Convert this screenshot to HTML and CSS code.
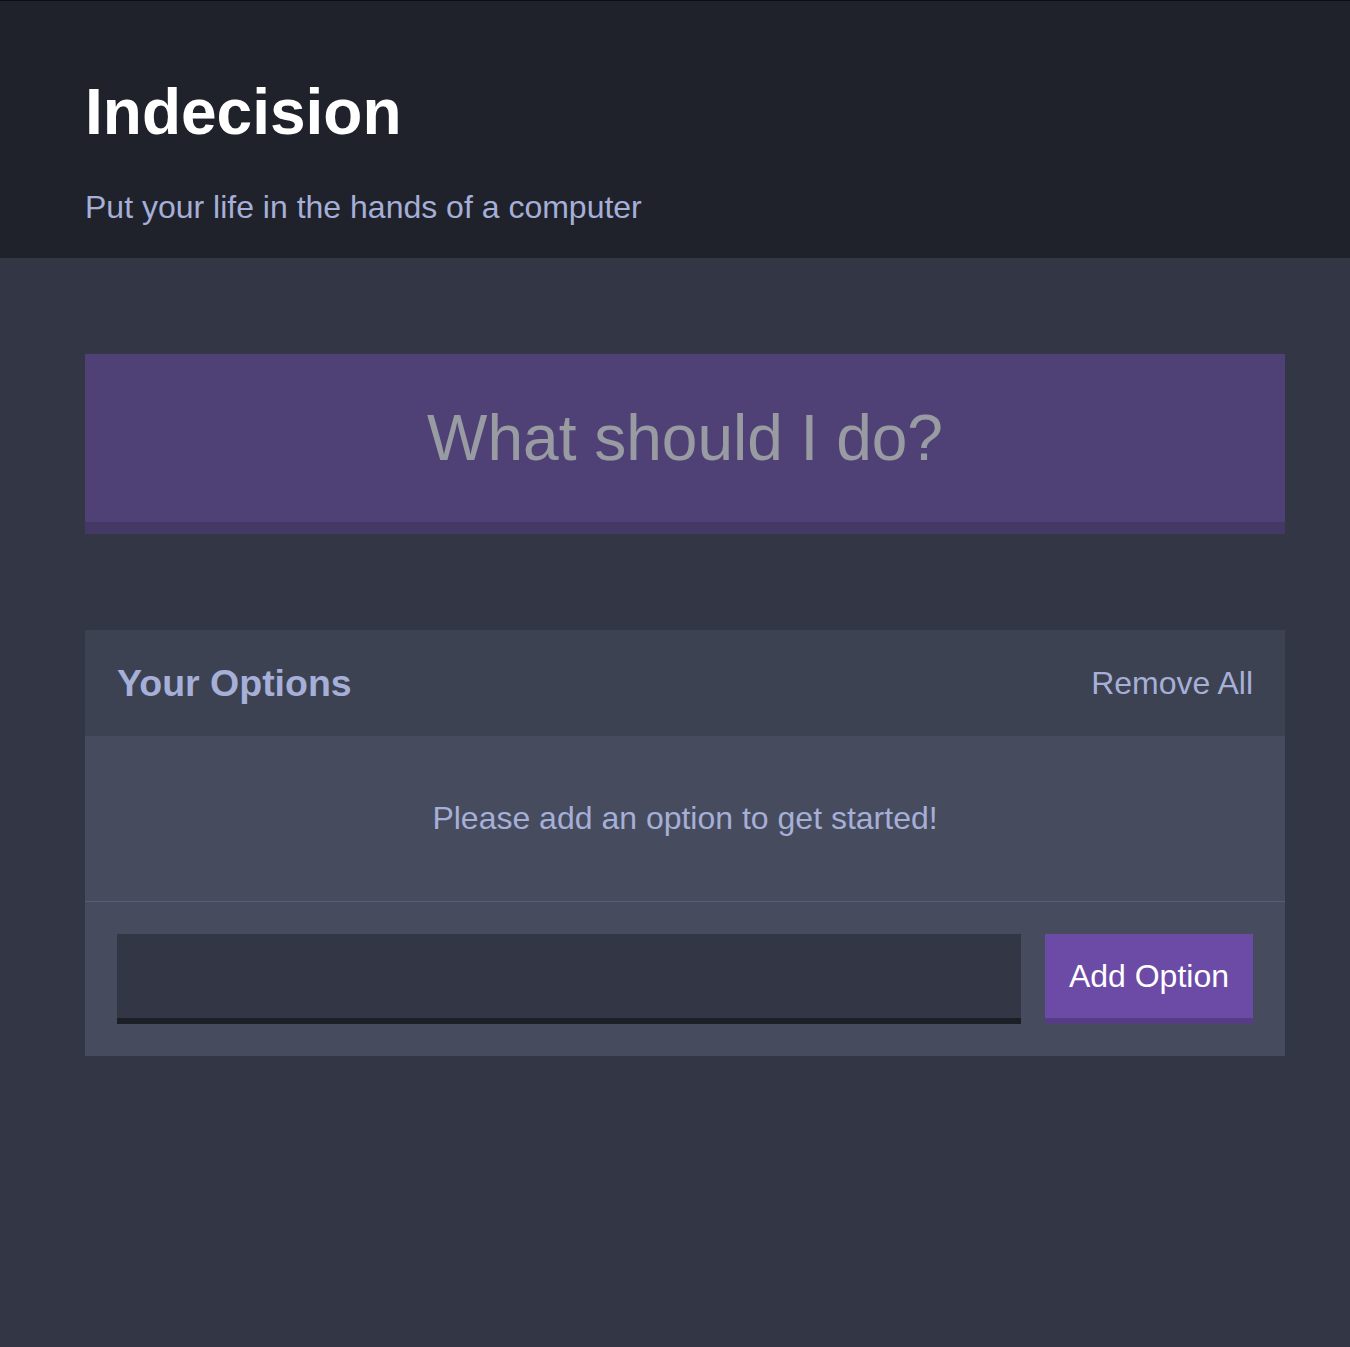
FILE: index.html
```html
<!DOCTYPE html>
<html lang="en">
<head>
<meta charset="utf-8">
<title>Indecision</title>
<link rel="stylesheet" href="styles.css">
</head>
<body>
  <header class="header">
    <div class="container">
      <h1 class="header__title">Indecision</h1>
      <h2 class="header__subtitle">Put your life in the hands of a computer</h2>
    </div>
  </header>
  <main class="container">
    <button class="big-button" disabled>What should I do?</button>
    <section class="widget">
      <div class="widget-header">
        <h3 class="widget-header__title">Your Options</h3>
        <button class="button button--link">Remove All</button>
      </div>
      <p class="widget__message">Please add an option to get started!</p>
      <form class="add-option">
        <input class="add-option__input" type="text" name="option">
        <button class="button" type="button">Add Option</button>
      </form>
    </section>
  </main>
</body>
</html>
```

FILE: styles.css
```css
* {
  box-sizing: border-box;
}

html, body {
  margin: 0;
  padding: 0;
}

body {
  font-family: "Liberation Sans", Arial, Helvetica, sans-serif;
  font-size: 32px;
  background: #333745;
  min-height: 1347px;
}

.container {
  max-width: 1200px;
  margin: 0 65px 0 85px;
}

.header {
  background: #20222b;
  border-top: 1px solid #0c0d10;
  padding: 31px 0 33px;
  margin-bottom: 96px;
}

.header__title {
  color: #ffffff;
  font-size: 64px;
  font-weight: bold;
  line-height: 74px;
  margin: 43px 0 40px;
}

.header__subtitle {
  color: #a5afd7;
  font-size: 32px;
  font-weight: normal;
  line-height: 36px;
  margin: 0;
}

.big-button {
  display: block;
  width: 100%;
  background: #6c4ba6;
  border: none;
  border-bottom: 12px solid #563c85;
  color: #ffffff;
  font-family: inherit;
  font-size: 64px;
  font-weight: normal;
  line-height: 74px;
  padding: 47px 24px;
  margin: 0 0 96px;
  opacity: 0.5;
}

.widget {
  background: #464b5e;
  margin-bottom: 96px;
}

.widget-header {
  background: #3c4251;
  color: #a5afd7;
  display: flex;
  justify-content: space-between;
  align-items: center;
  padding: 32px;
}

.widget-header__title {
  margin: 0;
  font-size: 37.5px;
  font-weight: bold;
  line-height: 42px;
}

.widget__message {
  border-bottom: 1px solid #585d75;
  color: #a5afd7;
  margin: 0;
  padding: 64px;
  text-align: center;
  font-size: 32px;
  line-height: 37px;
}

.add-option {
  display: flex;
  padding: 32px;
}

.add-option__input {
  background: #333745;
  border: none;
  border-bottom: 6px solid #1d1f27;
  color: #a5afd7;
  flex-grow: 1;
  margin: 0 24px 0 0;
  padding: 16px;
  font-family: inherit;
  font-size: 32px;
}

.button {
  background: #6c4ba6;
  border: none;
  border-bottom: 6px solid #563c85;
  color: #ffffff;
  font-family: inherit;
  font-size: 32px;
  font-weight: normal;
  line-height: 36px;
  padding: 24px;
}

.button--link {
  background: none;
  border: none;
  color: #a5afd7;
  padding: 0;
}
```
